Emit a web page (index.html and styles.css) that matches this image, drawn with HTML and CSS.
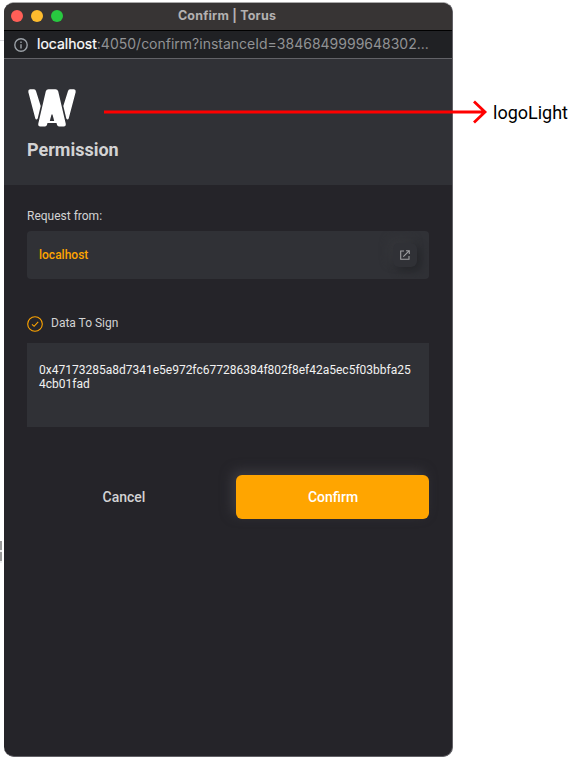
FILE: index.html
```html
<!DOCTYPE html>
<html lang="en">
<head>
<meta charset="utf-8">
<title>Confirm | Torus</title>
<link rel="stylesheet" href="styles.css">
</head>
<body>
<main class="stage">
  <span class="edge-rule"></span>
  <span class="edge-mark"></span>
  <section class="window">
    <header class="titlebar">
      <div class="lights"><i class="light red"></i><i class="light yellow"></i><i class="light green"></i></div>
      <span class="title">Confirm | Torus</span>
    </header>
    <div class="address">
      <svg class="info" viewBox="0 0 14 14"><circle cx="7" cy="7" r="6.2"/><path d="M7 6.2v4.2M7 3.5v1.4"/></svg>
      <span class="url"><b>localhost</b>:4050/confirm?instanceId=3846849999648302...</span>
    </div>
    <div class="hero">
      <svg class="logo" viewBox="0 0 48 38">
        <path class="peak" d="M2 0.300H6Q7.500 0.300 8 2L12.700 17L9.700 29.500Q8.300 31.500 7.300 29.500L0.300 3Q0 0.500 2 0.300Z"/>
        <path class="peak" d="M46 0.300H42Q40.500 0.300 40 2L35.300 17L38.300 29.500Q39.700 31.500 40.700 29.500L47.700 3Q48 0.500 46 0.300Z"/>
        <path class="peak" d="M20.500 0.300H27.500Q29.500 0.300 30.200 2.300L37.700 34.500Q38.200 37.500 35.700 37.500H31Q29.400 37.500 29 35.800L28.500 34H19.500L19 35.800Q18.600 37.500 17 37.500H12.300Q9.800 37.500 10.300 34.500L17.800 2.300Q18.500 0.300 20.500 0.300Z"/>
        <path class="hole" d="M23.500 25.500H24.500L26.200 32H21.800Z"/>
      </svg>
      <h1>Permission</h1>
    </div>
    <div class="content">
      <p class="label">Request from:</p>
      <div class="origin">
        <span>localhost</span>
        <button class="open" aria-label="Open">
          <svg viewBox="0 0 12 12"><path d="M5 2H1.700v8.300H10V7M7 1.700h3.300V5M10.300 1.700L4.300 7.700"/></svg>
        </button>
      </div>
      <div class="data-label">
        <svg viewBox="0 0 16 16"><circle cx="8" cy="8" r="7.300"/><path d="M5 8.300L7.100 10.300L11.200 5.800"/></svg>
        <span>Data To Sign</span>
      </div>
      <div class="data">0x47173285a8d7341e5e972fc677286384f802f8ef42a5ec5f03bbfa254cb01fad</div>
      <div class="actions">
        <button class="cancel">Cancel</button>
        <button class="confirm">Confirm</button>
      </div>
    </div>
  </section>
  <div class="callout">
    <svg viewBox="0 0 384 24"><path d="M0 12H381M370 1.500L381 12L370 22.500"/></svg>
    <span>logoLight</span>
  </div>
</main>
</body>
</html>
```

FILE: styles.css
```css
* { box-sizing: border-box; }
body { margin: 0; background: #fff; font-family: Roboto, sans-serif; }
button { border: 0; padding: 0; font: inherit; }
.stage { position: relative; width: 569px; height: 761px; padding: 2px 0 0 4px; overflow: hidden; }
.window { display: flex; flex-direction: column; width: 449px; height: 755px; overflow: hidden; border: solid #626166; border-width: 1px 1px 1px 0; border-top-color: #aaa; border-radius: 10px; background: #252429; }
.titlebar { position: relative; flex: none; height: 28px; border-bottom: 1px solid #000; background: #373434; display: flex; align-items: center; justify-content: center; }
.lights { position: absolute; left: 7px; top: 7px; display: flex; gap: 8px; }
.light { width: 12px; height: 12px; border-radius: 50%; }
.red { background: #ff5f57; }
.yellow { background: #febc2e; }
.green { background: #28c840; }
.title { font: 700 12.5px/27px Inter, sans-serif; letter-spacing: .2px; color: #b3b1b1; position: relative; left: -1px; top: -1px; }
.address { flex: none; height: 28px; display: flex; align-items: center; padding-left: 10px; gap: 9px; background: #202124; border-bottom: 1px solid #626267; }
.info { width: 14px; height: 14px; fill: none; stroke: #9aa0a6; stroke-width: 1.4; }
.url { position: relative; top: -1px; font-family: Inter, sans-serif; font-size: 14px; line-height: 20px; color: #919294; white-space: nowrap; }
.url b { font-weight: 400; color: #fff; -webkit-text-stroke: .2px #fff; }
.hero { flex: none; height: 126px; padding: 30px 23px 0; background: #303136; }
.logo { display: block; width: 48px; height: 38px; margin-left: 1px; }
.peak { fill: #fff; }
.hole { fill: #303136; }
h1 { margin: 12px 0 0; font-size: 18px; line-height: 22px; font-weight: 700; color: #d3d3d4; }
.content { padding: 24px 23px 0; color: #d3d3d4; }
.label { margin: 0; font-size: 12px; line-height: 14px; }
.origin { display: flex; align-items: center; justify-content: space-between; height: 48px; margin-top: 8px; padding: 0 12px; border-radius: 4px; background: #303136; color: #ffa500; font-size: 12px; font-weight: 500; overflow: hidden; }
.open { display: grid; place-items: center; width: 24px; height: 24px; border-radius: 6px; background: #303136; box-shadow: 4px 4px 8px #25262a, -4px -4px 10px #36373b; }
.open svg { width: 12px; height: 12px; fill: none; stroke: #a0a0a3; stroke-width: 1.1; }
.data-label { display: flex; align-items: center; gap: 8px; height: 16px; margin-top: 37px; font-size: 12px; }
.data-label span { position: relative; top: -1px; }
.data-label svg { width: 16px; height: 16px; fill: none; stroke: #ffa500; stroke-width: 1.1; }
.data { height: 84px; margin-top: 11px; padding: 20px 12px; background: #303136; color: #f2f2f2; font-size: 12px; line-height: 14px; overflow-wrap: anywhere; }
.actions { display: grid; grid-template-columns: 1fr 193px; gap: 16px; height: 44px; margin-top: 48px; }
.cancel, .confirm { font-size: 14px; font-weight: 500; border-radius: 6px; padding-left: 1px; }
.cancel { background: transparent; color: #d3d3d4; }
.confirm { background: #ffa500; color: #fff; box-shadow: -4px -4px 12px #3b3a40; }
.callout { position: absolute; left: 104px; top: 100px; display: flex; align-items: center; gap: 5px; height: 24px; color: #000; font-size: 18px; white-space: nowrap; }
.callout svg { width: 384px; height: 24px; fill: none; stroke: #f00; stroke-width: 2.8; }
.edge-rule { position: absolute; left: 0; top: 40px; width: 4px; height: 1px; background: #d8d8dc; }
.edge-mark { position: absolute; left: 0; top: 541px; width: 2px; height: 22px; background: repeating-linear-gradient(#999 0 9px, #eee 9px 11px); }
```
